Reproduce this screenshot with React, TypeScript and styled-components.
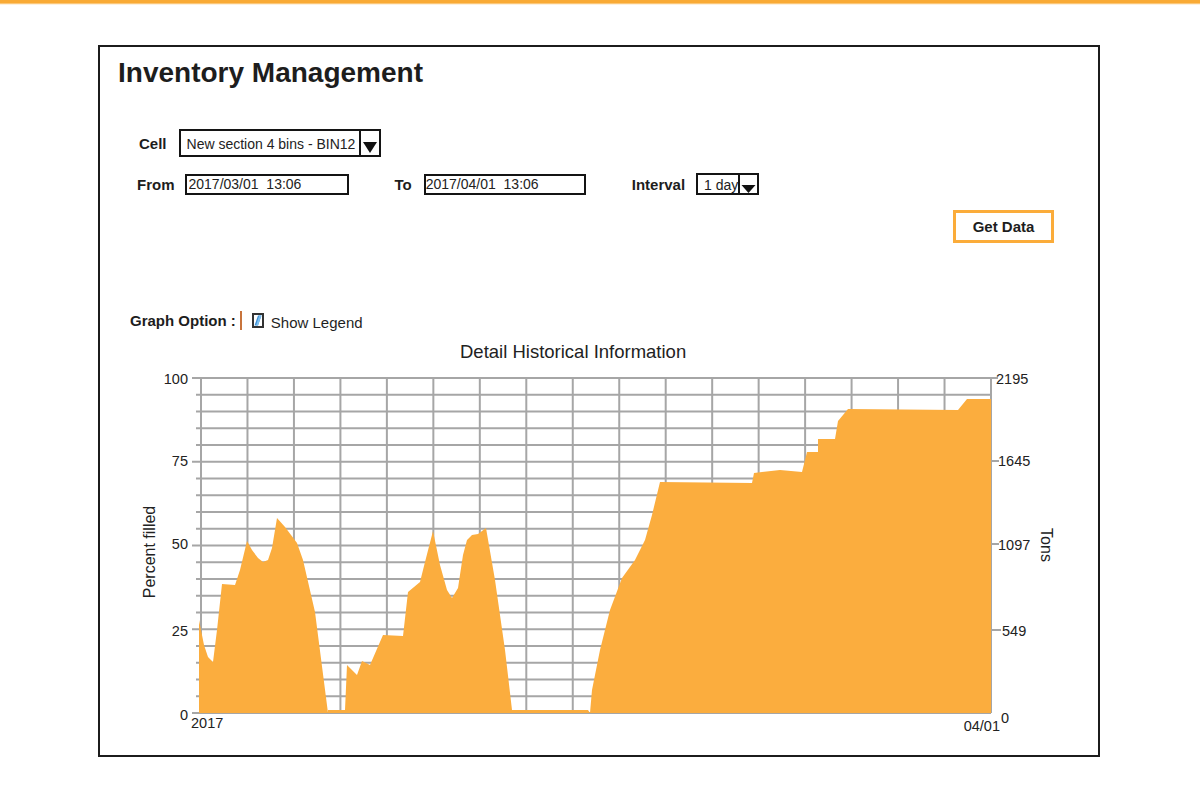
import React from "react";
import styled, { createGlobalStyle } from "styled-components";

const GlobalStyle = createGlobalStyle`
  html, body { margin: 0; padding: 0; background: #ffffff; }
  body { font-family: "Liberation Sans", Arial, sans-serif; color: #1f1f1f; }
  * { box-sizing: border-box; }
`;

const Page = styled.div`
  width: 1200px;
  height: 800px;
  overflow: hidden;
`;

const TopBar = styled.div`
  height: 5px;
  background: linear-gradient(#f9aa35 0, #f9aa35 3px, #fde3bb 4px, #ffffff 5px);
`;

const Body = styled.div`
  padding: 40px 0 0 98px;
`;

const Frame = styled.section`
  width: 1002px;
  height: 712px;
  border: 2px solid #1c1c1c;
  display: flex;
  flex-direction: column;
`;

const Title = styled.h1`
  margin: 10px 0 0 18px;
  font-size: 28px;
  line-height: 32px;
  font-weight: 700;
  color: #1d1d1d;
`;

const Row = styled.div<{ $top: number; $left: number; $height: number }>`
  display: flex;
  align-items: center;
  margin-top: ${(p) => p.$top}px;
  padding-left: ${(p) => p.$left}px;
  height: ${(p) => p.$height}px;
`;

const Label = styled.span<{ $gap: number; $before?: number }>`
  font-size: 15px;
  font-weight: 700;
  color: #1d1d1d;
  margin-left: ${(p) => p.$before ?? 0}px;
  margin-right: ${(p) => p.$gap}px;
  white-space: nowrap;
`;

const SelectWrap = styled.div<{ $height: number }>`
  display: flex;
  height: ${(p) => p.$height}px;
`;

const SelectValue = styled.div<{ $width: number }>`
  width: ${(p) => p.$width}px;
  height: 100%;
  border: 2px solid #141414;
  font-size: 14px;
  display: flex;
  align-items: center;
  padding: 2px 0 0 6px;
  color: #222;
  white-space: nowrap;
  overflow: hidden;
`;

const ArrowBox = styled.div<{ $width: number }>`
  width: ${(p) => p.$width}px;
  height: 100%;
  border: 2px solid #141414;
  border-left-width: 0;
  background: #fff;
  position: relative;
`;

const TextBox = styled.input<{ $width: number; $pad: number }>`
  width: ${(p) => p.$width}px;
  height: 21px;
  border: 2px solid #141414;
  border-radius: 0;
  padding: 0 0 0 ${(p) => p.$pad}px;
  font-family: "Liberation Sans", Arial, sans-serif;
  font-size: 14px;
  color: #222;
  background: #fff;
  outline: none;
`;

const ButtonRow = styled.div`
  display: flex;
  justify-content: flex-end;
  margin-top: 15px;
  padding-right: 44px;
`;

const GetDataButton = styled.button`
  width: 101px;
  height: 33px;
  border: 3px solid #fbac3a;
  background: #fff;
  font-family: "Liberation Sans", Arial, sans-serif;
  font-size: 15px;
  font-weight: 700;
  color: #1d1d1d;
  padding: 0;
  cursor: pointer;
`;

const OptionLabel = styled.span`
  font-size: 15px;
  font-weight: 700;
  color: #1d1d1d;
`;

const Divider = styled.span`
  display: inline-block;
  width: 2px;
  height: 19px;
  background: #c8743c;
  margin: 0 10px 0 4px;
`;

const LegendText = styled.span`
  font-size: 15px;
  color: #1f1f1f;
  margin-left: 7px;
  margin-top: 4px;
`;

const ChartSvg = styled.svg`
  display: block;
  margin-top: 5px;
`;

function Select({ value, width, height, arrowW, triW, triH, triTop }: {
  value: string; width: number; height: number; arrowW: number; triW: number; triH: number; triTop: number;
}) {
  const inner = arrowW - 2;
  return (
    <SelectWrap $height={height}>
      <SelectValue $width={width}>{value}</SelectValue>
      <ArrowBox $width={arrowW}>
        <svg width={inner} height={height - 4} style={{ position: "absolute", left: 0, top: 0 }}>
          <polygon
            points={`${(inner - triW) / 2},${triTop} ${(inner + triW) / 2},${triTop} ${inner / 2},${triTop + triH}`}
            fill="#111"
          />
        </svg>
      </ArrowBox>
    </SelectWrap>
  );
}

function LegendCheck() {
  return (
    <svg width="12" height="15" viewBox="0 0 12 15">
      <rect x="1" y="1" width="10" height="13" fill="#fff" stroke="#333" strokeWidth="2" />
      <polygon points="6,2.5 9.5,2.5 6,12.5 2.5,12.5" fill="#3d8fd6" />
      <polygon points="7.2,2.5 9.5,2.5 6,12.5 4,12.5" fill="#7cc0f0" />
    </svg>
  );
}

const AREA: [number, number][] = [
  [199, 713], [199, 620], [204, 645], [208, 657], [213, 662], [217, 630], [222, 584], [235, 585],
  [240, 570], [247, 541], [252, 550], [258, 558], [263, 562], [268, 560], [272, 548], [277, 518],
  [285, 527], [297, 543], [303, 560], [315, 612], [328, 713], [328, 710], [345, 710], [347, 665],
  [357, 675], [362, 661], [370, 665], [383, 635], [403, 636], [408, 592], [420, 582], [425, 562],
  [433, 531], [440, 565], [447, 590], [452, 598], [458, 588], [463, 555], [467, 540], [472, 535],
  [478, 534], [486, 528], [495, 580], [505, 650], [512, 710], [588, 710], [590, 713], [592, 690],
  [600, 650], [610, 610], [622, 578], [635, 560], [645, 540], [652, 515], [660, 482], [752, 483],
  [754, 473], [780, 470], [802, 472], [807, 452], [818, 452], [818, 439], [835, 439], [838, 421],
  [848, 409], [958, 410], [967, 399], [991, 399], [991, 713],
];

const GRID = "#a6a6a6";
const INK = "#222";

function Chart() {
  const left = 201;
  const right = 991;
  const top = 378;
  const bottom = 713;
  const vCount = 17;
  const hCount = 20;
  const vx = Array.from({ length: vCount + 1 }, (_, i) => left + ((right - left) * i) / vCount);
  const hy = Array.from({ length: hCount + 1 }, (_, j) => top + ((bottom - top) * j) / hCount);
  const leftLabels: [string, number][] = [["100", 379], ["75", 461], ["50", 544], ["25", 631]];
  const rightLabels: [string, number, number][] = [["2195", 379, 996], ["1645", 461, 998], ["1097", 545, 998], ["549", 631, 1002]];
  return (
    <ChartSvg width={998} height={410} viewBox="100 335 998 410">
      <text x={460} y={351} fontSize="18.5" fill={INK} dominantBaseline="central" fontFamily="Liberation Sans, Arial, sans-serif">
        Detail Historical Information
      </text>
      <g stroke={GRID} strokeWidth={2}>
        {hy.map((y, j) => (
          <line key={`h${j}`} x1={j % 5 === 0 ? 192 : 196} x2={right} y1={y} y2={y} />
        ))}
        {vx.map((x, i) => (
          <line key={`v${i}`} x1={x} x2={x} y1={top - 1} y2={bottom} />
        ))}
        <line x1={right} x2={right + 7} y1={top} y2={top} />
        <line x1={right} x2={right + 8} y1={461} y2={461} />
        <line x1={right} x2={right + 8} y1={544} y2={544} />
        <line x1={right} x2={right + 10} y1={630} y2={630} />
      </g>
      <polygon points={AREA.map((p) => p.join(",")).join(" ")} fill="#fbad3e" />
      <g fontFamily="Liberation Sans, Arial, sans-serif" fontSize="14.5" fill={INK}>
        {leftLabels.map(([t, y]) => (
          <text key={t} x={188} y={y} textAnchor="end" dominantBaseline="central">{t}</text>
        ))}
        <text x={188} y={715} textAnchor="end" dominantBaseline="central">0</text>
        <text x={191} y={723} dominantBaseline="central">2017</text>
        {rightLabels.map(([t, y, x]) => (
          <text key={t} x={x} y={y} dominantBaseline="central">{t}</text>
        ))}
        <text x={1000} y={726} textAnchor="end" dominantBaseline="central">04/01</text>
        <text x={1001} y={718} dominantBaseline="central">0</text>
        <text x={149} y={552} fontSize="16" textAnchor="middle" dominantBaseline="central" transform="rotate(-90 149 552)">
          Percent filled
        </text>
        <text x={1046} y={545} fontSize="16" textAnchor="middle" dominantBaseline="central" transform="rotate(90 1046 545)">
          Tons
        </text>
      </g>
    </ChartSvg>
  );
}

export default function App() {
  return (
    <>
      <GlobalStyle />
      <Page>
        <TopBar />
        <Body>
          <Frame>
            <Title>Inventory Management</Title>
            <Row $top={40} $left={39} $height={28}>
              <Label $gap={12}>Cell</Label>
              <Select value="New section 4 bins - BIN12" width={182} height={28} arrowW={20} triW={14} triH={11} triTop={11} />
            </Row>
            <Row $top={16} $left={37} $height={22}>
              <Label $gap={10}>From</Label>
              <TextBox $width={164} $pad={2} readOnly value="2017/03/01  13:06" />
              <Label $gap={12} $before={46}>To</Label>
              <TextBox $width={162} $pad={0} readOnly value="2017/04/01  13:06" />
              <Label $gap={11} $before={46}>Interval</Label>
              <Select value="1 day" width={44} height={22} arrowW={19} triW={14} triH={8} triTop={10} />
            </Row>
            <ButtonRow>
              <GetDataButton type="button">Get Data</GetDataButton>
            </ButtonRow>
            <Row $top={67} $left={30} $height={20}>
              <OptionLabel>Graph Option :</OptionLabel>
              <Divider />
              <LegendCheck />
              <LegendText>Show Legend</LegendText>
            </Row>
            <Chart />
          </Frame>
        </Body>
      </Page>
    </>
  );
}
